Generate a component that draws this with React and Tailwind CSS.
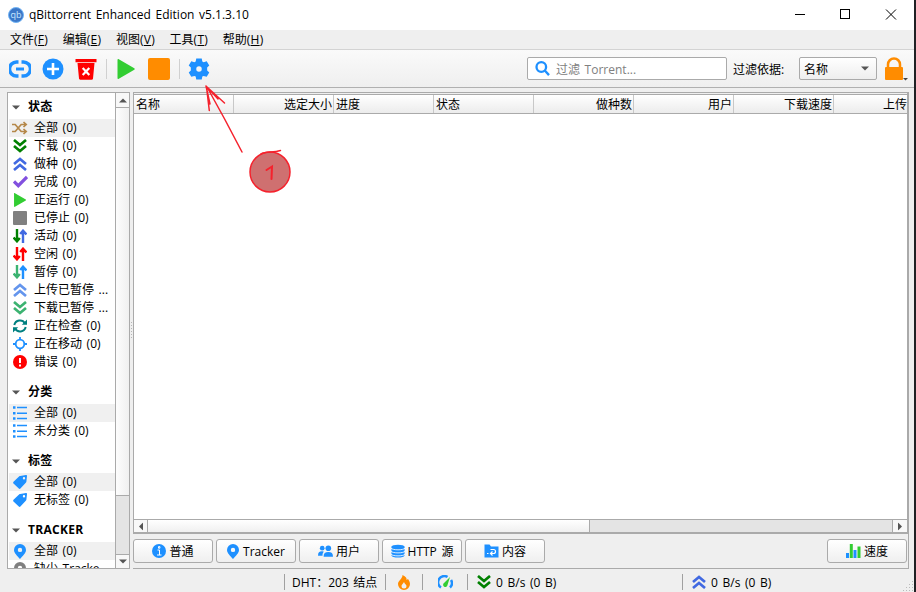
import { Fragment } from 'react'

const menus = [
    ['文件', 'F'],
    ['编辑', 'E'],
    ['视图', 'V'],
    ['工具', 'T'],
    ['帮助', 'H'],
]

const columns = [
    { label: '名称', align: 'text-left' },
    { label: '选定大小', align: 'text-right' },
    { label: '进度', align: 'text-left' },
    { label: '状态', align: 'text-left' },
    { label: '做种数', align: 'text-right' },
    { label: '用户', align: 'text-right' },
    { label: '下载速度', align: 'text-right' },
]

function Chevrons({ color, up }) {
    return (
        <svg width="14" height="14" viewBox="0 0 14 14" fill="none" stroke={color} strokeWidth="2.7">
            {up ? <path d="M1 7l6-5 6 5M1 13l6-5 6 5" /> : <path d="M1 1l6 5 6-5M1 7l6 5 6-5" />}
        </svg>
    )
}

function Arrows({ down, up }) {
    return (
        <svg width="14" height="14" viewBox="0 0 14 14" fill="none" strokeWidth="2.4">
            <path d="M4 0v12M.6 8.500L4 12.300 6.800 9" stroke={down} />
            <path d="M10 14V2M7.200 5L10 1.700 13.400 5.500" stroke={up} />
        </svg>
    )
}

function Shuffle() {
    return (
        <svg width="16" height="14" viewBox="0 0 16 14" fill="none" stroke="#b5884a" strokeWidth="1.7">
            <path d="M0 3.5h3.200l6 7h4.500M0 10.500h3.200l6-7h4.500M11.500 1l2.700 2.500L11.500 6M11.500 8l2.700 2.500-2.700 2.500" />
        </svg>
    )
}

function Check() {
    return (
        <svg width="15" height="14" viewBox="0 0 15 14" fill="none" stroke="#8250df" strokeWidth="3.2">
            <path d="M1 6.500l4.300 4.200L14 2" />
        </svg>
    )
}

function Play({ size }) {
    return (
        <svg width={size} height={size} viewBox="0 0 20 20" fill="#32cd32">
            <path d="M1.5.8c0-.7.7-.9 1.3-.5l15.500 9c.5.3.5 1.1 0 1.4l-15.500 9c-.6.4-1.3.2-1.3-.5z" />
        </svg>
    )
}

function Refresh() {
    return (
        <svg width="14" height="14" viewBox="0 0 14 14" fill="none" stroke="#008080" strokeWidth="2">
            <path d="M1.300 6A5.800 5.800 0 0 1 12 4.500M12.700 8A5.800 5.800 0 0 1 2 9.500" />
            <path d="M14 .5v5.200H8.800zM0 13.500V8.300h5.200z" fill="#008080" stroke="none" />
        </svg>
    )
}

function Target() {
    return (
        <svg width="14" height="14" viewBox="0 0 14 14" fill="none" stroke="#1e90ff" strokeWidth="1.8">
            <circle cx="7" cy="7" r="4.300" />
            <path d="M7 0v3M7 11v3M0 7h3M11 7h3" />
        </svg>
    )
}

function Alert() {
    return (
        <svg width="14" height="14" viewBox="0 0 14 14">
            <circle cx="7" cy="7" r="7" fill="#f00" />
            <path d="M7 3v5M7 9.400v2" stroke="#fff" strokeWidth="2" />
        </svg>
    )
}

function ListIcon() {
    return (
        <svg width="14" height="14" viewBox="0 0 14 14" stroke="#1e90ff" strokeWidth="1.500">
            <path d="M4 1.500h10M4 7.200h10M4 12.600h10" />
            <path d="M0 1.500h2.500M0 7.200h2.500M0 12.600h2.500" strokeWidth="2.500" />
        </svg>
    )
}

function Tag() {
    return (
        <svg width="14" height="14" viewBox="0 0 14 14" fill="#1e90ff">
            <path fillRule="evenodd" d="M7.200.9L13 0c.6 0 1 .4 1 1l-.6 5.600c0 .4-.2.7-.4 1l-5.600 6c-.5.5-1.100.5-1.600 0L.5 8.400C0 8 0 7.300.5 6.800L6.300 1.300c.3-.2.600-.4.9-.4zM11 2a1.200 1.200 0 1 0 0 2.400A1.200 1.200 0 0 0 11 2z" />
        </svg>
    )
}

function Pin({ color }) {
    return (
        <svg width="12" height="15" viewBox="0 0 12 15" fill={color}>
            <path fillRule="evenodd" d="M6 0a6 6 0 0 1 6 6c0 3-3.500 6-6 9C3.500 12 0 9 0 6a6 6 0 0 1 6-6zm0 3.700a2.200 2.200 0 1 0 0 4.400 2.200 2.200 0 0 0 0-4.400z" />
        </svg>
    )
}

function Triangle({ className }) {
    return (
        <svg className={className} width="8" height="5" viewBox="0 0 8 5" fill="#555">
            <path d="M0 .5h8l-4 4z" />
        </svg>
    )
}

const groups = [
    {
        title: '状态',
        rows: [
            [<Shuffle />, '全部 (0)'],
            [<Chevrons color="#008000" />, '下载 (0)'],
            [<Chevrons color="#4169e1" up />, '做种 (0)'],
            [<Check />, '完成 (0)'],
            [<Play size={14} />, '正运行 (0)'],
            [<div className="size-3.5 rounded-[1px] bg-[#808080]" />, '已停止 (0)'],
            [<Arrows down="#008000" up="#4169e1" />, '活动 (0)'],
            [<Arrows down="#ff0000" up="#ff0000" />, '空闲 (0)'],
            [<Arrows down="#3cb371" up="#1e90ff" />, '暂停 (0)'],
            [<Chevrons color="#6495ed" up />, '上传已暂停 ...'],
            [<Chevrons color="#3cb371" />, '下载已暂停 ...'],
            [<Refresh />, '正在检查 (0)'],
            [<Target />, '正在移动 (0)'],
            [<Alert />, '错误 (0)'],
        ],
    },
    {
        title: '分类',
        rows: [
            [<ListIcon />, '全部 (0)'],
            [<ListIcon />, '未分类 (0)'],
        ],
    },
    {
        title: '标签',
        rows: [
            [<Tag />, '全部 (0)'],
            [<Tag />, '无标签 (0)'],
        ],
    },
    {
        title: 'TRACKER',
        rows: [
            [<Pin color="#1e90ff" />, '全部 (0)'],
            [<Pin color="#808080" />, '缺少 Tracke...'],
        ],
    },
]

function TitleBar() {
    return (
        <div className="flex h-[30px] shrink-0 items-center bg-white pl-2">
            <svg width="16" height="16" viewBox="0 0 16 16">
                <circle cx="8" cy="8" r="7.500" fill="#3b78c8" stroke="#72b4f5" />
                <text x="8" y="11" textAnchor="middle" fontSize="9" fill="#c8e8ff" fontFamily="Open Sans" wordSpacing="0">qb</text>
            </svg>
            <span className="ml-[5px]">qBittorrent Enhanced Edition v5.1.3.10</span>
            <svg className="ml-auto mr-[17px]" width="102" height="12" viewBox="0 0 102 12" fill="none" stroke="#000" shapeRendering="crispEdges">
                <path d="M0 5.500h10" />
                <path d="M45.500.500h9v9h-9z" />
                <path d="M91 .5l10 10M101 .5l-10 10" shapeRendering="auto" />
            </svg>
        </div>
    )
}

function MenuBar() {
    return (
        <div className="flex h-5 shrink-0 items-center gap-[14.500px] border-b border-[#d3d3d3] pl-[10px] pt-px">
            {menus.map(([label, key]) => (
                <span key={key}>
                    {label}
                    <span className="tracking-[0.3px]">(<span className="underline">{key}</span>)</span>
                </span>
            ))}
        </div>
    )
}

function Toolbar() {
    return (
        <div className="flex h-[38px] shrink-0 items-center border-b border-[#b0b0b0] bg-gradient-to-b from-[#fafafa] to-[#efefef] pl-[9px]">
            <svg width="22" height="18" viewBox="0 0 22 18" fill="none" stroke="#1e90ff" strokeWidth="3.500">
                <path d="M9.500 2H7.500a6.300 6.300 0 0 0 0 14h2M12.500 2h2a6.300 6.300 0 0 1 0 14h-2" />
                <path d="M7 9h8" strokeWidth="3" />
            </svg>
            <svg className="ml-[11px]" width="22" height="22" viewBox="0 0 22 22">
                <circle cx="11" cy="11" r="10.500" fill="#1e90ff" />
                <path d="M11 5v12M5 11h12" stroke="#fff" strokeWidth="2.600" />
            </svg>
            <svg className="ml-[11px]" width="22" height="22" viewBox="0 0 22 22">
                <path d="M.5 1h21v3.300H.5zM2.500 5h17L18 20.500c-.1.800-.500 1.200-1.300 1.200H5.300c-.8 0-1.200-.4-1.300-1.200z" fill="#f00" />
                <path d="M7.700 10l6.600 7M14.300 10l-6.600 7" stroke="#fff" strokeWidth="2.200" />
            </svg>
            <div className="ml-[9px] h-5 w-px bg-[#d0d0d0]" />
            <div className="ml-[9px]"><Play size={20} /></div>
            <div className="ml-[12px] size-[22px] rounded-[2px] bg-[#ff8c00]" />
            <div className="ml-[9px] h-5 w-px bg-[#d0d0d0]" />
            <svg className="ml-[8px]" width="22" height="22" viewBox="0 0 24 24" fill="#1e90ff">
                <path fillRule="evenodd" d="M9 .5h6l.6 3.200 1.500.8 3.300-1 2.800 4.600-2.300 2.300v3.200l2.300 2.300-2.800 4.600-3.300-1-1.500.8-.6 3.200H9l-.6-3.200-1.500-.8-3.300 1-2.800-4.600 2.300-2.300v-3.200L.8 8.100l2.800-4.600 3.300 1 1.500-.8zM12 9a3 3 0 1 0 0 6 3 3 0 0 0 0-6z" />
            </svg>
            <div className="ml-auto flex h-[23px] w-[200px] items-center rounded-[2px] border border-[#aaa] bg-white pl-[7px] text-[#808080]">
                <svg width="15" height="15" viewBox="0 0 15 15" fill="none" stroke="#1e90ff" strokeWidth="2.300">
                    <circle cx="6.300" cy="6" r="4.800" />
                    <path d="M9.800 9.500l4.200 4.600" />
                </svg>
                <span className="ml-[6px] pt-[2px]">过滤 Torrent...</span>
            </div>
            <span className="ml-[6px] w-[66px] pt-[2px]">过滤依据:</span>
            <div className="flex h-[23px] w-[78px] items-center justify-between rounded-[2px] border border-[#aaa] bg-gradient-to-b from-white to-[#eee] pl-[4px] pr-[7px]">
                <span className="pt-[2px]">名称</span>
                <Triangle />
            </div>
            <svg className="ml-[8px] mr-[6px]" width="23" height="24" viewBox="0 0 23 24">
                <path d="M3 12V7.500a6 6 0 0 1 12 0V12" fill="none" stroke="#ff8c00" strokeWidth="2.500" />
                <rect y="10" width="18" height="13" rx="1" fill="#ff8c00" />
                <path d="M18 21h5l-2.500 2.500z" fill="#444" />
            </svg>
        </div>
    )
}

function Sidebar() {
    return (
        <div className="flex h-[477px] w-[123px] shrink-0 overflow-hidden border border-[#aaa] bg-white">
            <div className="flex w-[107px] shrink-0 flex-col gap-[9px] pl-px pt-[2px]">
                {groups.map((group) => (
                    <div key={group.title}>
                        <div className="flex h-6 items-center pl-[3px] font-bold tracking-[0.3px]">
                            <Triangle className="mr-[8px]" />
                            {group.title}
                        </div>
                        {group.rows.map(([icon, label], i) => (
                            <div key={label} className={`flex h-[18px] items-center whitespace-nowrap ${i === 0 ? 'bg-[#f0f0f0]' : ''}`}>
                                <div className="ml-[3px] flex w-4 shrink-0 justify-center">{icon}</div>
                                <span className="ml-[6px]">{label}</span>
                            </div>
                        ))}
                    </div>
                ))}
            </div>
            <div className="flex w-[14px] flex-col border-l border-[#aaa] bg-[#e4e4e4]">
                <div className="flex h-[15px] items-center justify-center border-b border-[#aaa] bg-[#f8f8f8]">
                    <Triangle className="rotate-180" />
                </div>
                <div className="h-[388px] border-b border-[#aaa] bg-gradient-to-r from-[#fdfdfd] to-[#f0f0f0]" />
                <div className="mt-auto flex h-[14px] items-center justify-center border-t border-[#aaa] bg-[#f8f8f8]">
                    <Triangle />
                </div>
            </div>
        </div>
    )
}

function TabButton({ icon, children }) {
    return (
        <div className="flex h-6 w-20 items-center justify-center gap-[3px] rounded-[3px] border border-[#aaa] bg-gradient-to-b from-white to-[#efefef]">
            {icon}
            <span className="pt-px">{children}</span>
        </div>
    )
}

function TransferList() {
    return (
        <div className="h-[442px] w-[775px] border border-[#aaa] pt-px">
            <div className="flex h-full flex-col bg-white">
                <div className="flex h-[20px] shrink-0 overflow-hidden border-y border-[#aaa] bg-gradient-to-b from-white to-[#ececec] leading-[19px]">
                    {columns.map((column) => (
                        <div key={column.label} className={`w-[100px] shrink-0 border-r border-[#c8c8c8] pl-[2px] pr-px ${column.align}`}>
                            {column.label}
                        </div>
                    ))}
                    <div className="flex-1 whitespace-nowrap text-right">上传</div>
                </div>
                <div className="flex-1" />
                <div className="flex h-[14px] shrink-0 border-y border-[#aaa] bg-[#e4e4e4]">
                    <div className="flex w-[14px] items-center justify-center border-r border-[#aaa] bg-[#f8f8f8]">
                        <Triangle className="rotate-90" />
                    </div>
                    <div className="w-[442px] border-r border-[#aaa] bg-gradient-to-b from-white to-[#f0f0f0]" />
                    <div className="ml-auto flex w-[15px] items-center justify-center border-l border-[#aaa] bg-[#f8f8f8]">
                        <Triangle className="-rotate-90" />
                    </div>
                </div>
            </div>
        </div>
    )
}

function Tabs() {
    return (
        <div className="mt-[5px] flex w-[774px] gap-[3px]">
            <TabButton
                icon={
                    <svg width="14" height="14" viewBox="0 0 14 14">
                        <circle cx="7" cy="7" r="7" fill="#1e90ff" />
                        <path d="M5.500 6h2v5M5 11h4.500M6.500 2.600h1.400v1.600H6.500z" stroke="#fff" fill="none" />
                    </svg>
                }
            >
                普通
            </TabButton>
            <TabButton icon={<Pin color="#1e90ff" />}>
                <span className="ml-px">Tracker</span>
            </TabButton>
            <TabButton
                icon={
                    <svg width="15" height="14" viewBox="0 0 16 14" fill="#1e90ff">
                        <circle cx="4.500" cy="4" r="2.500" />
                        <circle cx="11" cy="4" r="3" />
                        <path d="M0 12c0-3.500 1.500-4.700 4-4.700 1 0 2 .2 2.200.6C5.200 8.800 4.800 10 4.800 12zM6 13c0-3.500 1.500-5 5-5s5 1.500 5 5z" />
                    </svg>
                }
            >
                用户
            </TabButton>
            <TabButton
                icon={
                    <svg width="14" height="14" viewBox="0 0 15 14">
                        <path d="M.5 2.500v9c0 3.300 14 3.300 14 0v-9z" fill="#1e90ff" />
                        <ellipse cx="7.500" cy="2.500" rx="7" ry="2.300" fill="#1e90ff" />
                        <path d="M0 4c2 2.300 13 2.300 15 0M0 7.300c2 2.300 13 2.300 15 0M0 10.500c2 2.300 13 2.300 15 0" fill="none" stroke="#fff" strokeWidth=".9" />
                    </svg>
                }
            >
                HTTP 源
            </TabButton>
            <TabButton
                icon={
                    <svg width="15" height="14" viewBox="0 0 15 14">
                        <path d="M.5.500h5l1.500 2h7.500v11H.5z" fill="#1e90ff" />
                        <path d="M6.500 5.500h3a2 2 0 0 1 0 4h-3M8.500 7.500l-2 2 2 2M3 9.500h1.500" fill="none" stroke="#fff" strokeWidth="1.200" />
                    </svg>
                }
            >
                内容
            </TabButton>
            <div className="ml-auto">
                <TabButton
                    icon={
                        <svg width="15" height="14" viewBox="0 0 15 14">
                            <path d="M0 9h3v5H0zM7.500 6h3v8h-3z" fill="#1e90ff" />
                            <path d="M3.800 0h3v14h-3zM11.500 2.500h3V14h-3z" fill="#32cd32" />
                        </svg>
                    }
                >
                    速度
                </TabButton>
            </div>
        </div>
    )
}

function Divider() {
    return <div className="h-4 w-px shrink-0 bg-[#a0a0a0]" />
}

function StatusBar() {
    const speeds = [
        <Chevrons color="#008000" />,
        <Chevrons color="#4169e1" up />,
    ]

    return (
        <div className="flex h-[23px] shrink-0 items-center pl-[284px] pt-[3px]">
            <Divider />
            <span className="w-[100px] pl-[7px] pt-px">DHT：203 结点</span>
            <Divider />
            <div className="flex w-[36px] justify-center">
                <svg width="12" height="15" viewBox="0 0 12 15">
                    <path fillRule="evenodd" d="M4.500 0C8 1.500 9 3.500 8.500 5L10 4c1.200 1.500 2 3.300 2 5a6 6 0 0 1-12 0C0 5.500 4.500 4 4.500 0zM6 7c-1 2-2.500 2.500-2.500 4a2.500 2.500 0 0 0 5 0C8.500 9.500 6.500 9 6 7z" fill="#ff8c00" />
                </svg>
            </div>
            <Divider />
            <div className="flex w-[44px] justify-center">
                <svg width="15" height="14" viewBox="0 0 15 14" fill="none">
                    <path d="M3 12.500A6 6 0 0 1 9.500 2M13 5a6 6 0 0 1-1 7.500" stroke="#1e90ff" strokeWidth="2.500" />
                    <path d="M12 2L9.500 10a2.200 2.200 0 1 1-3.500-2z" fill="#32cd32" />
                </svg>
            </div>
            {speeds.map((icon, i) => (
                <Fragment key={i}>
                    <Divider />
                    <div className="flex w-[214px] items-center gap-[5px] pl-[9px]">
                        {icon}
                        <span className="whitespace-nowrap pt-px">0 B/s (0 B)</span>
                    </div>
                </Fragment>
            ))}
            <svg className="ml-auto self-end" width="11" height="11" viewBox="0 0 11 11" fill="#bbb">
                <path d="M9 0h1v1H9zM9 3h1v1H9zM9 6h1v1H9zM9 9h1v1H9zM6 3h1v1H6zM6 6h1v1H6zM6 9h1v1H6zM3 6h1v1H3zM3 9h1v1H3zM0 9h1v1H0z" />
            </svg>
        </div>
    )
}

function Annotation() {
    return (
        <svg className="pointer-events-none absolute left-0 top-0" width="916" height="592" fill="none" stroke="#f5222d" strokeWidth="1.500" strokeLinecap="round">
            <path d="M242 152Q225 119 207 87M206.500 87l2.800 23.500M207 87l17.500 16M206 86l4 18M206 86l12 13" />
            <circle cx="270" cy="172" r="20" fill="#cf7070" />
            <path d="M261 154c5-3 12-1 19.500-3.500" />
            <path d="M266.500 170l5.500-3.500-.5 12.500" strokeWidth="2" />
        </svg>
    )
}

export default function App() {
    return (
        <div className="relative flex h-[592px] w-[916px] overflow-hidden bg-[#202124] font-['Open_Sans','Noto_Sans_CJK_SC',sans-serif] text-[12px] leading-[18px] text-black [word-spacing:1.500px]">
            <div className="flex w-[914px] flex-col bg-[#efefef]">
                <TitleBar />
                <MenuBar />
                <Toolbar />
                <div className="flex h-[481px] shrink-0 pl-[7px] pt-[4px]">
                    <Sidebar />
                    <div className="flex w-[3px] shrink-0 items-center justify-center">
                        <svg width="3" height="18" viewBox="0 0 3 18" fill="#b5b5b5">
                            <path d="M1 0h1v1H1zM1 3h1v1H1zM1 6h1v1H1zM1 9h1v1H1zM1 12h1v1H1zM1 15h1v1H1z" />
                        </svg>
                    </div>
                    <div className="w-[776px] border-b border-r border-[#aaa]">
                        <TransferList />
                        <Tabs />
                    </div>
                </div>
                <StatusBar />
            </div>
            <Annotation />
        </div>
    )
}
